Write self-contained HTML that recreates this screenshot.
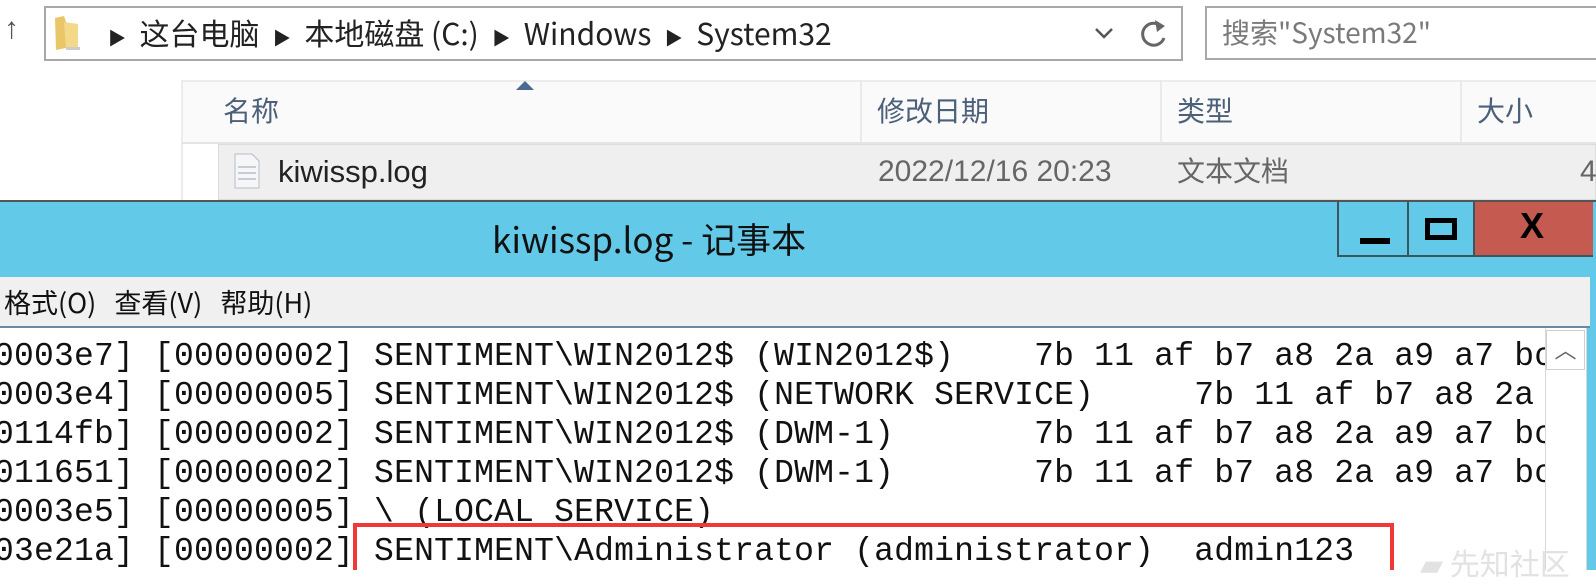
<!DOCTYPE html>
<html><head><meta charset="utf-8"><style>
*{margin:0;padding:0;box-sizing:border-box}
body{width:1596px;height:570px;overflow:hidden;background:#fff;position:relative;font-family:"Liberation Sans","Noto Sans CJK SC",sans-serif;color:#1e1e1e}
.a{position:absolute}
.cjk{font-family:"Noto Sans CJK SC","Liberation Sans",sans-serif}
</style></head><body>
<!-- explorer -->
<div class="a" style="left:4px;top:12px;font-size:30px;color:#555">↑</div>
<div class="a" style="left:44px;top:6px;width:1139px;height:55px;border:2px solid #a8a8a8;background:#fff"></div>
<svg class="a" style="left:52px;top:14px" width="34" height="38"><path d="M3 4 L12 2 L14 8 L14 34 L4 36 Z" fill="#e9c667"/><path d="M12 8 L26 10 L26 34 L14 34Z" fill="#f3d98a"/><rect x="14" y="33" width="14" height="3" fill="#ccc"/></svg>
<div class="a cjk" style="left:108px;top:10px;font-size:30px;line-height:44px;white-space:pre;color:#222"><span style="font-size:18px">▶</span>  这台电脑  <span style="font-size:18px">▶</span>  本地磁盘 (C:)  <span style="font-size:18px">▶</span>  Windows  <span style="font-size:18px">▶</span>  System32</div>
<svg class="a" style="left:1094px;top:26px" width="20" height="14"><path d="M2 3 L10 11 L18 3" fill="none" stroke="#555" stroke-width="2.5"/></svg>
<svg class="a" style="left:1138px;top:14px" width="34" height="40"><path d="M24 13 A11 11 0 1 0 26 24" fill="none" stroke="#666" stroke-width="3"/><path d="M17 6 L27 12 L19 18Z" fill="#666"/></svg>
<div class="a" style="left:1205px;top:6px;width:400px;height:54px;border:2px solid #a8a8a8"></div>
<div class="a cjk" style="left:1222px;top:10px;font-size:28px;line-height:44px;color:#7a7a7a">搜索"System32"</div>
<div class="a" style="left:181px;top:80px;width:1415px;height:64px;background:#fafafa;border-top:2px solid #ececec;border-left:2px solid #ececec;border-bottom:2px solid #e4e4e4"></div>
<div class="a" style="left:516px;top:81px;width:0;height:0;border-left:9px solid transparent;border-right:9px solid transparent;border-bottom:9px solid #4a6a90"></div>
<div class="a" style="left:860px;top:80px;width:2px;height:62px;background:#eaeaea"></div>
<div class="a" style="left:1160px;top:80px;width:2px;height:62px;background:#eaeaea"></div>
<div class="a" style="left:1460px;top:80px;width:2px;height:62px;background:#eaeaea"></div>
<div class="a cjk" style="left:223px;top:90px;font-size:28px;color:#4c607a">名称</div>
<div class="a cjk" style="left:877px;top:90px;font-size:28px;color:#4c607a">修改日期</div>
<div class="a cjk" style="left:1177px;top:90px;font-size:28px;color:#4c607a">类型</div>
<div class="a cjk" style="left:1477px;top:90px;font-size:28px;color:#4c607a">大小</div>
<div class="a" style="left:181px;top:144px;width:2px;height:58px;background:#ececec"></div>
<div class="a" style="left:218px;top:144px;width:1378px;height:56px;background:#efefef;border:1px solid #dcdcdc"></div>
<svg class="a" style="left:234px;top:153px" width="26" height="36"><path d="M1 1 H18 L25 8 V35 H1Z" fill="#f4f6f8" stroke="#b8bcc2"/><g stroke="#c8ccd2" stroke-width="2"><line x1="4" y1="14" x2="22" y2="14"/><line x1="4" y1="20" x2="22" y2="20"/><line x1="4" y1="26" x2="22" y2="26"/></g></svg>
<div class="a" style="left:278px;top:154px;font-size:31px;color:#222">kiwissp.log</div>
<div class="a" style="left:878px;top:155px;font-size:30px;color:#666">2022/12/16 20:23</div>
<div class="a cjk" style="left:1177px;top:150px;font-size:28px;color:#666">文本文档</div>
<div class="a" style="left:1580px;top:155px;font-size:30px;color:#666">4</div>
<!-- notepad -->
<div class="a" style="left:0;top:200px;width:1596px;height:2px;background:#555"></div>
<div class="a" style="left:0;top:202px;width:1596px;height:368px;background:#63c9e8"></div>
<div class="a cjk" style="left:492px;top:214px;font-size:35px;line-height:50px;color:#111">kiwissp.log - 记事本</div>
<div class="a" style="left:1337px;top:202px;width:72px;height:55px;border:2px solid #3e5560;border-top:none"></div>
<div class="a" style="left:1360px;top:238px;width:30px;height:6px;background:#000"></div>
<div class="a" style="left:1407px;top:202px;width:68px;height:55px;border:2px solid #3e5560;border-top:none;border-left:none"></div>
<div class="a" style="left:1425px;top:218px;width:32px;height:22px;border:5px solid #000"></div>
<div class="a" style="left:1475px;top:202px;width:118px;height:55px;background:#c45a50;border-bottom:2px solid #3e5560"></div>
<div class="a" style="left:1520px;top:205px;font-size:36px;font-weight:bold;color:#000">X</div>
<div class="a" style="left:0;top:277px;width:1590px;height:51px;background:#f0f0f0"></div>
<div class="a cjk" style="left:4px;top:284px;font-size:27px;line-height:36px;white-space:pre;color:#111">格式(O)   查看(V)   帮助(H)</div>
<div class="a" style="left:0;top:326px;width:1590px;height:2px;background:#6a8aa0"></div>
<div class="a" style="left:0;top:328px;width:1545px;height:242px;background:#fff;overflow:hidden">
<pre style="position:absolute;left:-6px;top:9px;font-family:'Liberation Mono',monospace;font-size:33px;letter-spacing:0.2px;line-height:39px;color:#111">0003e7] [00000002] SENTIMENT\WIN2012$ (WIN2012$)    7b 11 af b7 a8 2a a9 a7 bc
0003e4] [00000005] SENTIMENT\WIN2012$ (NETWORK SERVICE)     7b 11 af b7 a8 2a
0114fb] [00000002] SENTIMENT\WIN2012$ (DWM-1)       7b 11 af b7 a8 2a a9 a7 bc
011651] [00000002] SENTIMENT\WIN2012$ (DWM-1)       7b 11 af b7 a8 2a a9 a7 bc
0003e5] [00000005] \ (LOCAL SERVICE)
03e21a] [00000002] SENTIMENT\Administrator (administrator)  admin123</pre>
<div class="a" style="left:353px;top:195px;width:1041px;height:60px;border:4px solid #f03838"></div>
</div>
<div class="a" style="left:1545px;top:328px;width:42px;height:242px;background:#fff;border-left:1px solid #d8d8d8;border-right:1px solid #d8d8d8"></div>
<div class="a" style="left:1546px;top:330px;width:39px;height:40px;border:1px solid #d0d0d0;color:#666;font-size:22px;text-align:center;line-height:40px">︿</div>
<div class="a cjk" style="left:1420px;top:540px;font-size:30px;color:#e2e2e2">▰ 先知社区</div>
</body></html>
